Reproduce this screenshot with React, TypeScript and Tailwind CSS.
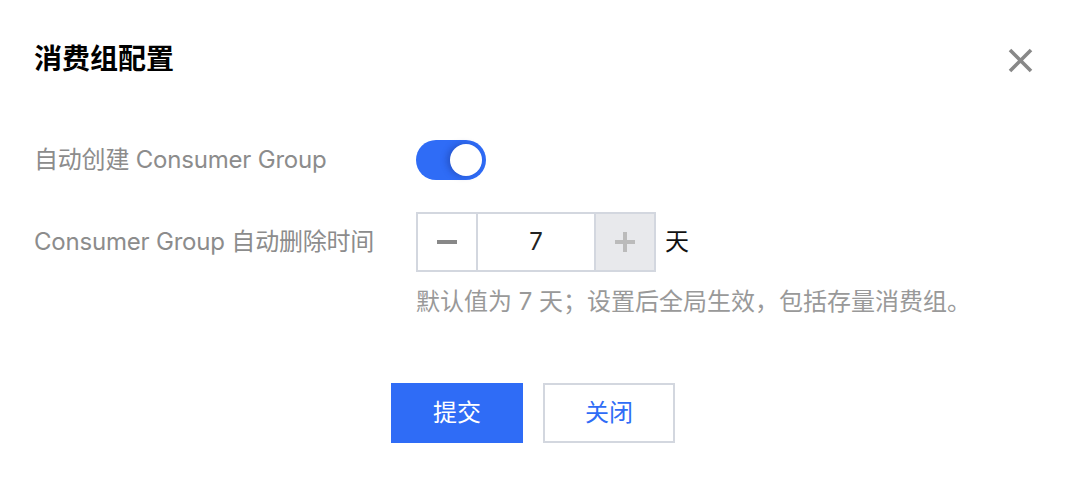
import React from "react";

export default function App() {
  return (
    <div className="w-[1066px] h-[480px] bg-white font-['Inter','Noto_Sans_CJK_SC',sans-serif] flex flex-col">
      <div className="flex items-center justify-between pl-[34px] pr-[33px] pt-[44px]">
        <div className="text-[28px] leading-[28px] font-bold text-black">消费组配置</div>
        <svg width="25" height="25" viewBox="0 0 25 25" className="mt-[4px]">
          <path d="M2 2 L23 23 M23 2 L2 23" stroke="#888888" strokeWidth="3.6" strokeLinecap="butt" />
        </svg>
      </div>

      <div className="flex items-center pl-[34px] mt-[67px]">
        <div className="w-[382px] text-[24px] leading-[40px] tracking-[-0.2px] text-[#8c8c8c]">自动创建 Consumer Group</div>
        <div className="w-[70px] h-[40px] rounded-full bg-[#2f6cf6] flex items-center justify-end pr-[4px]">
          <div className="w-[32px] h-[32px] rounded-full bg-white shadow-[-3px_0_6px_rgba(20,40,120,0.35)]" />
        </div>
      </div>

      <div className="flex items-center pl-[34px] mt-[32px]">
        <div className="w-[382px] text-[24px] leading-[60px] tracking-[-0.2px] text-[#8c8c8c]">Consumer Group 自动删除时间</div>
        <div className="flex h-[60px] border-2 border-[#d3d7df]">
          <div className="w-[58px] flex items-center justify-center">
            <div className="w-[20px] h-[4px] bg-[#888888]" />
          </div>
          <div className="w-[2px] bg-[#d3d7df]" />
          <div className="w-[116px] flex items-center justify-center text-[24px] text-[#222222]">7</div>
          <div className="w-[2px] bg-[#d3d7df]" />
          <div className="w-[58px] bg-[#e8e9ec] flex items-center justify-center">
            <svg width="20" height="20" viewBox="0 0 20 20">
              <path d="M0 10 H20 M10 0 V20" stroke="#bbbbbb" strokeWidth="4" />
            </svg>
          </div>
        </div>
        <div className="ml-[9px] text-[24px] leading-[60px] text-[#111111]">天</div>
      </div>

      <div className="pl-[416px] mt-[18px] text-[24px] leading-[24px] text-[#999999]">
        默认值为 7 天；设置后全局生效，包括存量消费组。
      </div>

      <div className="flex justify-center gap-[20px] mt-[69px]">
        <button className="w-[132px] h-[60px] bg-[#2f6cf6] text-white text-[24px]">提交</button>
        <button className="w-[132px] h-[60px] border-2 border-[#d3d7df] bg-white text-[#2f6cf6] text-[24px]">关闭</button>
      </div>
    </div>
  );
}
